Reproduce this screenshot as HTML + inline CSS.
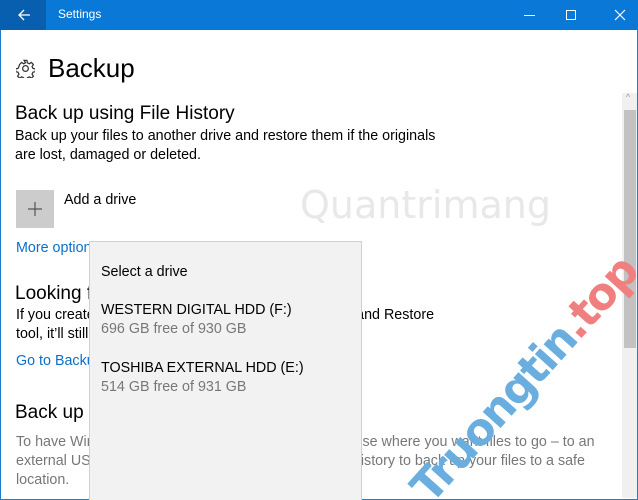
<!DOCTYPE html>
<html><head><meta charset="utf-8"><style>
*{margin:0;padding:0;box-sizing:border-box}
html,body{width:638px;height:500px;overflow:hidden}
body{background:#fff;font-family:"Segoe UI","Liberation Sans",sans-serif;color:#000;position:relative}
.a{position:absolute;white-space:nowrap}
.tb{left:0;top:0;width:638px;height:30px;background:#0a78d7}
.frame{left:0;top:30px;width:638px;height:470px;border:1px solid #1a7fd4;border-top:none}
.p{font-size:14.3px;line-height:19px}
.g{color:#777}
.l{color:#0a6fc9}
</style></head><body>
<div class="a tb"></div>
<div class="a" style="left:0;top:0;width:46px;height:30px;background:#085faf"></div>
<svg class="a" style="left:17px;top:8px" width="14" height="14"><path d="M13 7H2M7 2L2 7l5 5" stroke="#fff" stroke-width="1.3" fill="none"/></svg>
<div class="a" style="left:58px;top:7px;color:#fff;font-size:12px">Settings</div>
<div class="a" style="left:524px;top:15px;width:11px;height:1px;background:#fff"></div>
<div class="a" style="left:566px;top:10px;width:10px;height:10px;border:1px solid #fff"></div>
<svg class="a" style="left:614px;top:9px" width="12" height="12"><path d="M1 1L11 11M11 1L1 11" stroke="#fff" stroke-width="1.2"/></svg>
<div class="a frame"></div>
<svg class="a" style="left:16px;top:59px" width="19" height="19" viewBox="0 0 20 20"><g fill="none" stroke="#333" stroke-width="1.3"><circle cx="10" cy="10" r="3"/><path d="M8.5 1.5h3l.5 2.5 2 1 2.2-1.4 2.1 2.1-1.4 2.2 1 2 2.5.5v3l-2.5.5-1 2 1.4 2.2-2.1 2.1-2.2-1.4-2 1-.5 2.5h-3l-.5-2.5-2-1-2.2 1.4-2.1-2.1 1.4-2.2-1-2-2.5-.5v-3l2.5-.5 1-2L3.8 5.7l2.1-2.1L8 5l2-1z"/></g></svg>
<div class="a" style="left:48px;top:53px;font-size:26px">Backup</div>
<div class="a" style="left:15px;top:103px;font-size:19px">Back up using File History</div>
<div class="a p" style="left:15px;top:127px">Back up your files to another drive and restore them if the originals</div>
<div class="a p" style="left:15px;top:146px">are lost, damaged or deleted.</div>
<div class="a" style="left:300px;top:183px;font-size:38px;color:#e8e8e8;font-family:'DejaVu Sans',sans-serif">Quantrimang</div>
<div class="a" style="left:16px;top:190px;width:38px;height:38px;background:#ccc"></div>
<svg class="a" style="left:27px;top:201px" width="16" height="16"><path d="M8 1v14M1 8h14" stroke="#555" stroke-width="1.2"/></svg>
<div class="a p" style="left:64px;top:191px">Add a drive</div>
<div class="a p l" style="left:16px;top:239px">More options</div>
<div class="a" style="left:15px;top:283px;font-size:19px">Looking for an older backup?</div>
<div class="a p" style="left:16px;top:306px">If you created a backup using the Windows 7 Backup and Restore</div>
<div class="a p" style="left:16px;top:325px">tool, it’ll still work in Windows 10.</div>
<div class="a p l" style="left:16px;top:352px">Go to Backup and Restore (Windows 7)</div>
<div class="a" style="left:15px;top:402px;font-size:19px">Back up your files with OneDrive</div>
<div class="a p g" style="left:16px;top:433px">To have Windows back up your files to OneDrive, choose where you want files to go – to an</div>
<div class="a p g" style="left:16px;top:452px">external USB drive or a network drive – and use File History to back up your files to a safe</div>
<div class="a p g" style="left:16px;top:471px">location.</div>
<div class="a" style="left:622px;top:93px;width:15px;height:405px;background:#f0f0f0"></div>
<div class="a" style="left:624px;top:110px;width:12px;height:238px;background:#c2c2c2"></div>
<div class="a" style="left:626px;top:92px;font-size:9px;color:#999">^</div>
<div class="a" style="left:89px;top:241px;width:273px;height:262px;background:#f2f2f2;border:1px solid #d0d0d0"></div>
<div class="a p" style="left:101px;top:263px">Select a drive</div>
<div class="a p" style="left:101px;top:301px">WESTERN DIGITAL HDD (F:)</div>
<div class="a p g" style="left:101px;top:320px">696 GB free of 930 GB</div>
<div class="a p" style="left:101px;top:359px">TOSHIBA EXTERNAL HDD (E:)</div>
<div class="a p g" style="left:101px;top:378px">514 GB free of 931 GB</div>
<div class="a" style="left:365px;top:355px;width:320px;height:50px;text-align:center;transform:rotate(-48deg);transform-origin:center;font-family:'DejaVu Sans',sans-serif;font-weight:bold;font-size:44px;letter-spacing:-2px;line-height:50px"><span style="color:#6aaee0">Truongtin</span><span style="color:#f08080">.top</span></div>
</body></html>
